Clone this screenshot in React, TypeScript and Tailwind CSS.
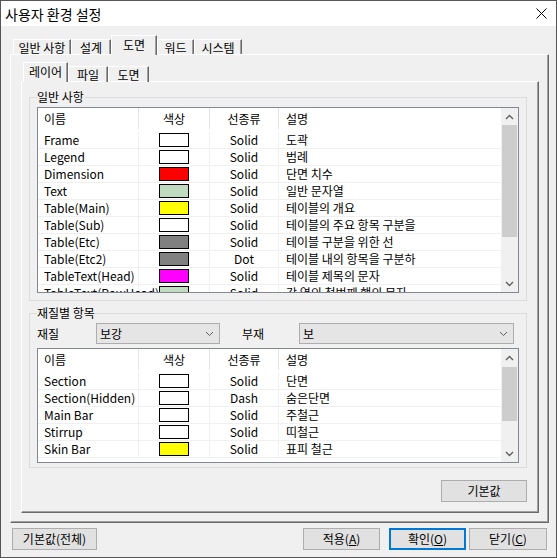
import React from 'react';

type Row = { name: string; color: string; line: string; desc: string };

const layerRows: Row[] = [
  { name: 'Frame', color: 'bg-white', line: 'Solid', desc: '도곽' },
  { name: 'Legend', color: 'bg-white', line: 'Solid', desc: '범례' },
  { name: 'Dimension', color: 'bg-[#ff0000]', line: 'Solid', desc: '단면 치수' },
  { name: 'Text', color: 'bg-[#c0dcc0]', line: 'Solid', desc: '일반 문자열' },
  { name: 'Table(Main)', color: 'bg-[#ffff00]', line: 'Solid', desc: '테이블의 개요' },
  { name: 'Table(Sub)', color: 'bg-white', line: 'Solid', desc: '테이블의 주요 항목 구분을' },
  { name: 'Table(Etc)', color: 'bg-[#808080]', line: 'Solid', desc: '테이블 구분을 위한 선' },
  { name: 'Table(Etc2)', color: 'bg-[#808080]', line: 'Dot', desc: '테이블 내의 항목을 구분하' },
  { name: 'TableText(Head)', color: 'bg-[#ff00ff]', line: 'Solid', desc: '테이블 제목의 문자' },
  { name: 'TableText(RowHead)', color: 'bg-[#c0dcc0]', line: 'Solid', desc: '각 열의 첫번째 행의 문자' },
];

const barRows: Row[] = [
  { name: 'Section', color: 'bg-white', line: 'Solid', desc: '단면' },
  { name: 'Section(Hidden)', color: 'bg-white', line: 'Dash', desc: '숨은단면' },
  { name: 'Main Bar', color: 'bg-white', line: 'Solid', desc: '주철근' },
  { name: 'Stirrup', color: 'bg-white', line: 'Solid', desc: '띠철근' },
  { name: 'Skin Bar', color: 'bg-[#ffff00]', line: 'Solid', desc: '표피 철근' },
];

const panel =
  'border border-t-white border-l-white border-r-[#696969] border-b-[#696969] shadow-[inset_-1px_-1px_0_#a0a0a0]';

function Chevron({ up }: { up?: boolean }) {
  return (
    <svg width="9" height="6" viewBox="0 0 9 6">
      <polyline
        points={up ? '1,5 4.5,1.5 8,5' : '1,1 4.5,4.5 8,1'}
        fill="none"
        stroke="#606060"
        strokeWidth="1.4"
      />
    </svg>
  );
}

function Tab({ label, active, width }: { label: string; active?: boolean; width: string }) {
  if (active) {
    return (
      <div
        className={`${width} relative z-10 h-[20px] flex justify-center pt-[1px] bg-[#f0f0f0] border-t border-l border-r border-t-white border-l-white border-r-[#696969] shadow-[inset_-1px_0_0_#a0a0a0]`}
      >
        {label}
      </div>
    );
  }
  return (
    <div
      className={`${width} h-[16px] flex items-center justify-center border-t border-l border-r border-t-white border-l-white border-r-[#696969] shadow-[inset_-1px_0_0_#a0a0a0]`}
    >
      {label}
    </div>
  );
}

function PropList({
  rows,
  height,
  thumb,
}: {
  rows: Row[];
  height: string;
  thumb: { gap: string; size: string };
}) {
  return (
    <div className={`${height} flex border border-[#828790] bg-white`}>
      <div className="flex-1 overflow-hidden">
        <div className="flex h-[24px] pb-[3px] items-center">
          <div className="w-[101px] h-full flex items-center pl-[6px] border-r border-[#e5e5e5]">이름</div>
          <div className="w-[71px] h-full flex items-center justify-center border-r border-[#e5e5e5]">색상</div>
          <div className="w-[69px] h-full flex items-center justify-center border-r border-[#e5e5e5]">선종류</div>
          <div className="flex-1 h-full flex items-center pl-[7px]">설명</div>
        </div>
        {rows.map((r) => (
          <div key={r.name} className="flex h-[17px] border-b border-[#f0f0f0]">
            <div className="w-[101px] flex items-center pl-[6px] border-r border-[#f0f0f0] whitespace-nowrap">
              {r.name}
            </div>
            <div className="w-[71px] flex items-start justify-center pt-[1px] border-r border-[#f0f0f0]">
              <div className={`w-[30px] h-[14px] border border-black ${r.color}`} />
            </div>
            <div className="w-[69px] flex items-center justify-center border-r border-[#f0f0f0]">{r.line}</div>
            <div className="flex-1 flex items-center pl-[7px] whitespace-nowrap">{r.desc}</div>
          </div>
        ))}
      </div>
      <div className="w-[17px] flex flex-col bg-[#f0f0f0]">
        <div className="h-[17px] flex items-center justify-center">
          <Chevron up />
        </div>
        <div className={thumb.gap} />
        <div className={`${thumb.size} mx-[1px] bg-[#cdcdcd]`} />
        <div className="flex-1" />
        <div className="h-[17px] flex items-center justify-center">
          <Chevron />
        </div>
      </div>
    </div>
  );
}

function Combo({ value, width }: { value: string; width: string }) {
  return (
    <div className={`${width} h-[21px] flex items-center justify-between pl-[3px] pr-[5px] bg-[#e5e5e5] border border-[#adadad]`}>
      <span>{value}</span>
      <svg width="9" height="6" viewBox="0 0 9 6">
        <polyline points="1,1 4.5,4.5 8,1" fill="none" stroke="#606060" strokeWidth="1" />
      </svg>
    </div>
  );
}

function Button({
  children,
  width,
  focused,
  className = '',
}: {
  children: React.ReactNode;
  width: string;
  focused?: boolean;
  className?: string;
}) {
  return (
    <div
      className={`${width} h-[22px] flex items-center justify-center bg-[#e1e1e1] ${
        focused ? 'border-2 border-[#0078d7]' : 'border border-[#adadad]'
      } ${className}`}
    >
      {children}
    </div>
  );
}

export default function App() {
  return (
    <div className="w-[557px] h-[558px] flex flex-col border border-[#555555] bg-[#f0f0f0] text-black text-[12px] leading-[16px] font-['Noto_Sans_CJK_KR','Liberation_Sans',sans-serif]">
      <div className="h-[25px] shrink-0 bg-white flex items-center justify-between pl-[4px] pr-[9px]">
        <span className="text-[14px] leading-[18px]">사용자 환경 설정</span>
        <svg width="11" height="11" viewBox="0 0 11 11">
          <path d="M0.5 0.5 L10.5 10.5 M10.5 0.5 L0.5 10.5" stroke="#000" strokeWidth="1" />
        </svg>
      </div>

      <div className="flex-1 flex flex-col pt-[9px] pl-[9px] pr-[7px]">
        <div className="flex items-end h-[20px] -mb-px pl-[3px]">
          <Tab label="일반 사항" width="w-[58px]" />
          <Tab label="설계" width="w-[40px]" />
          <Tab label="도면" width="w-[46px]" active />
          <Tab label="워드" width="w-[37px]" />
          <Tab label="시스템" width="w-[48px]" />
        </div>

        <div className={`${panel} pt-[7px] pl-[10px] pr-[9px] pb-[9px]`}>
          <div className="flex items-end h-[20px] -mb-px pl-[2px]">
            <Tab label="레이어" width="w-[45px]" active />
            <Tab label="파일" width="w-[40px]" />
            <Tab label="도면" width="w-[41px]" />
          </div>

          <div className={`${panel} flex flex-col pt-[7px] pl-[7px] pr-[11px] pb-[10px]`}>
            <fieldset className="border border-[#dcdcdc] px-[7px] pb-[7px]">
              <legend className="leading-[16px]">일반 사항</legend>
              <div className="mt-[2px]">
                <PropList rows={layerRows} height="h-[186px]" thumb={{ gap: 'h-0', size: 'h-[112px]' }} />
              </div>
            </fieldset>

            <fieldset className="mt-[4px] border border-[#dcdcdc] px-[7px] pb-[4px]">
              <legend className="leading-[16px]">재질별 항목</legend>
              <div className="mt-[2px] flex items-center">
                <span className="w-[59px]">재질</span>
                <Combo value="보강" width="w-[124px]" />
                <span className="w-[79px] pl-[22px]">부재</span>
                <Combo value="보" width="w-[215px]" />
              </div>
              <div className="mt-[4px]">
                <PropList rows={barRows} height="h-[115px]" thumb={{ gap: 'h-[1px]', size: 'h-[54px]' }} />
              </div>
            </fieldset>

            <div className="mt-[12px] flex justify-end">
              <Button width="w-[86px]">기본값</Button>
            </div>
          </div>
        </div>

        <div className="mt-[5px] flex items-center">
          <Button width="w-[85px]" className="ml-[2px]">
            기본값(전체)
          </Button>
          <div className="ml-auto mr-[2px] flex">
            <Button width="w-[77px]">
              적용(<span className="underline">A</span>)
            </Button>
            <Button width="w-[77px]" focused className="ml-[9px]">
              확인(<span className="underline">O</span>)
            </Button>
            <Button width="w-[78px]" className="ml-[3px]">
              닫기(<span className="underline">C</span>)
            </Button>
          </div>
        </div>
      </div>
    </div>
  );
}
